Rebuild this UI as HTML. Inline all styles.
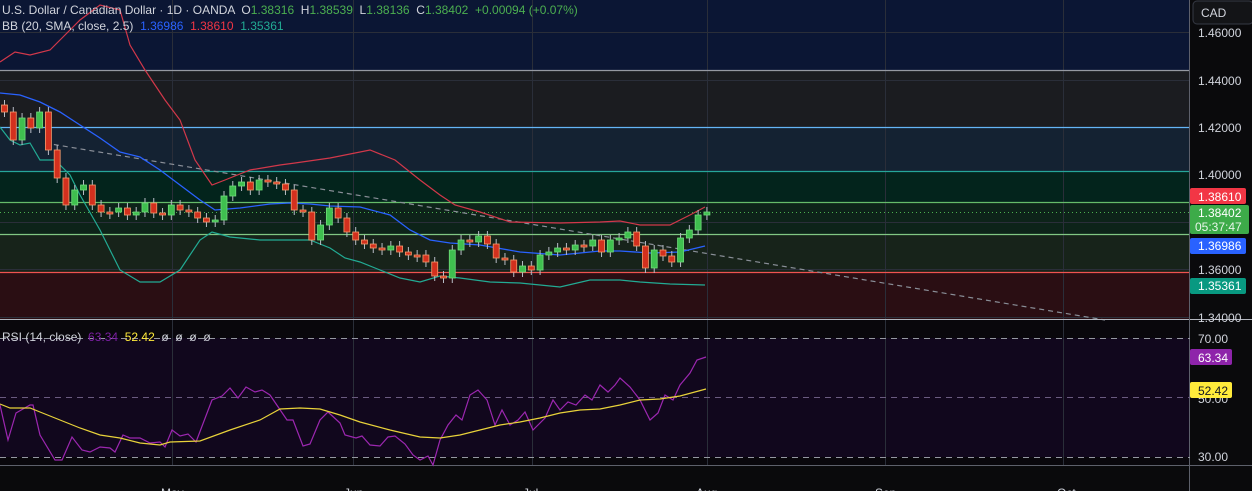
<!DOCTYPE html>
<html><head><meta charset="utf-8"><style>
html,body{margin:0;padding:0;background:#0a0a0c;width:1252px;height:491px;overflow:hidden;font-family:"Liberation Sans",sans-serif}
svg{position:absolute;left:0;top:0}
.lg{position:absolute;left:2px;font-size:12px;color:#d1d4dc;white-space:nowrap}
</style></head><body>
<svg id="s" width="1252" height="491" xmlns="http://www.w3.org/2000/svg">
<rect x="0" y="0" width="1190" height="70" fill="#0b1634"/>
<rect x="0" y="70" width="1190" height="57" fill="#1b1c20"/>
<rect x="0" y="127" width="1190" height="44" fill="#142232"/>
<rect x="0" y="171" width="1190" height="31" fill="#03241c"/>
<rect x="0" y="202" width="1190" height="32" fill="#0d2319"/>
<rect x="0" y="234" width="1190" height="38" fill="#17231a"/>
<rect x="0" y="272" width="1190" height="47" fill="#2a0e13"/>
<rect x="1190" y="0" width="62" height="320" fill="#0a0a0c"/>
<rect x="0" y="320" width="1190" height="145" fill="#09070c"/>
<rect x="0" y="338" width="1190" height="119" fill="#11071d"/>
<g stroke="#2a2e39" stroke-width="1">
<line x1="172.5" y1="0" x2="172.5" y2="465"/><line x1="353.5" y1="0" x2="353.5" y2="465"/>
<line x1="532.5" y1="0" x2="532.5" y2="465"/><line x1="707.5" y1="0" x2="707.5" y2="465"/>
<line x1="885.5" y1="0" x2="885.5" y2="465"/><line x1="1063.5" y1="0" x2="1063.5" y2="465"/>
<line x1="0" y1="32.5" x2="1190" y2="32.5"/><line x1="0" y1="80.5" x2="1190" y2="80.5"/>
<line x1="0" y1="222.5" x2="1190" y2="222.5"/><line x1="0" y1="269.5" x2="1190" y2="269.5"/>
<line x1="0" y1="317.5" x2="1190" y2="317.5"/>
</g>
<g stroke-width="1.2">
<line x1="0" y1="70.5" x2="1190" y2="70.5" stroke="#9598a1"/>
<line x1="0" y1="127.5" x2="1190" y2="127.5" stroke="#64b5f6"/>
<line x1="0" y1="171.5" x2="1190" y2="171.5" stroke="#26a69a"/>
<line x1="0" y1="202.5" x2="1190" y2="202.5" stroke="#66bb6a"/>
<line x1="0" y1="234.5" x2="1190" y2="234.5" stroke="#81c784"/>
<line x1="0" y1="272.5" x2="1190" y2="272.5" stroke="#ef5350"/>
</g>
<line x1="0" y1="212.5" x2="1190" y2="212.5" stroke="#4caf50" stroke-dasharray="1,3"/>
<line x1="45" y1="143" x2="1105" y2="320" stroke="#8a8f98" stroke-width="1.2" stroke-dasharray="5,4"/>
<polyline fill="none" stroke="#d2384a" stroke-width="1.2" points="0,62 15,52 30,55 50,50 60,40 80,20 100,5 120,10 130,45 145,70 165,100 180,120 195,160 212,185 225,180 250,170 280,165 295,163 330,158 370,150 395,160 420,180 440,195 455,205 480,212 510,222 560,223 600,222 620,221 640,225 670,225 690,215 705,207"/>
<polyline fill="none" stroke="#2962ff" stroke-width="1.3" points="0,93 20,95 40,102 60,112 80,125 100,138 120,152 140,157 160,170 180,185 200,200 215,210 240,208 270,204 290,203 310,204 330,206 360,207 390,215 410,230 430,240 450,243 480,245 520,252 560,255 600,251 620,251 650,253 680,252 705,246"/>
<polyline fill="none" stroke="#22ab94" stroke-width="1.2" points="0,127 10,140 20,145 30,143 40,160 55,160 70,175 80,195 100,230 110,250 120,270 140,282 160,282 180,270 200,240 212,232 230,237 260,240 290,240 310,240 330,248 345,258 360,262 380,270 400,278 420,282 440,276 460,278 490,282 520,283 560,287 590,280 620,280 640,282 670,284 705,285"/>
<g id="c"></g>
<line x1="0" y1="319.5" x2="1252" y2="319.5" stroke="#b2b5be"/>
<line x1="0" y1="465.5" x2="1252" y2="465.5" stroke="#5d606b"/>
<line x1="1189.5" y1="0" x2="1189.5" y2="491" stroke="#5d606b"/>
<line x1="0" y1="338.5" x2="1190" y2="338.5" stroke="#9598a1" stroke-dasharray="6,5"/>
<line x1="0" y1="397.5" x2="1190" y2="397.5" stroke="#6a5a80" stroke-dasharray="6,5"/>
<line x1="0" y1="457.5" x2="1190" y2="457.5" stroke="#9598a1" stroke-dasharray="6,5"/>
<polyline fill="none" stroke="#9c27b0" stroke-width="1.2" points="0,405 8,440 16,413 30,405 33,405 40,435 55,460 62,460 72,437 82,450 90,452 100,447 110,448 115,452 123,435 130,438 140,438 150,443 160,442 165,447 172,430 180,436 188,434 196,442 212,400 222,396 230,388 238,398 246,387 255,392 262,390 270,395 287,420 293,420 303,446 310,444 320,420 328,412 340,423 345,435 356,438 362,436 370,445 380,446 388,437 395,436 405,444 413,455 420,460 428,456 433,465 440,440 448,425 456,415 462,420 470,395 478,390 487,400 495,425 502,410 510,425 518,420 525,412 533,430 545,418 553,400 560,410 568,402 576,405 585,395 592,400 600,385 608,392 615,385 620,378 630,387 640,400 650,420 658,413 665,395 673,400 680,385 690,373 697,360 706,357"/>
<polyline fill="none" stroke="#e8d23a" stroke-width="1.2" points="0,404 10,408 30,408 40,412 60,420 80,428 100,435 120,438 140,443 160,445 170,442 200,441 230,430 260,420 280,409 300,408 320,409 340,415 360,422 390,430 420,437 440,438 460,435 480,430 500,425 520,422 540,418 560,413 580,410 600,409 620,405 640,400 660,399 680,396 706,389"/>
<g font-size="12" fill="#d1d4dc" font-family="Liberation Sans,sans-serif">
<text x="1198" y="37">1.46000</text><text x="1198" y="85">1.44000</text><text x="1198" y="132">1.42000</text>
<text x="1198" y="179">1.40000</text><text x="1198" y="274">1.36000</text><text x="1198" y="322">1.34000</text>
<text x="1198" y="343">70.00</text><text x="1198" y="403">50.00</text><text x="1198" y="461">30.00</text>
</g>
<rect x="1193" y="1" width="60" height="23" rx="4" fill="#131417" stroke="#363a45"/>
<text x="1201" y="17" font-size="12" fill="#d1d4dc" font-family="Liberation Sans,sans-serif">CAD</text>
<g font-size="12" font-family="Liberation Sans,sans-serif" fill="#fff">
<rect x="1190" y="188" width="56" height="16" rx="2" fill="#f23645"/><text x="1198" y="201">1.38610</text>
<rect x="1190" y="205" width="59" height="29" rx="2" fill="#3dab49"/><text x="1198" y="217">1.38402</text><text x="1195" y="231" fill="#e8f5e9">05:37:47</text>
<rect x="1190" y="238" width="56" height="16" rx="2" fill="#2962ff"/><text x="1198" y="250">1.36986</text>
<rect x="1190" y="278" width="56" height="16" rx="2" fill="#089981"/><text x="1198" y="290">1.35361</text>
<rect x="1190" y="349" width="42" height="16" rx="2" fill="#8e24aa"/><text x="1198" y="362">63.34</text>
<rect x="1190" y="382" width="42" height="16" rx="2" fill="#ffeb3b"/><text x="1198" y="395" fill="#131722">52.42</text>
</g>
<g font-size="12" fill="#d1d4dc" font-family="Liberation Sans,sans-serif">
<text x="161" y="497">May</text><text x="344" y="497">Jun</text><text x="523" y="497">Jul</text>
<text x="696" y="497">Aug</text><text x="875" y="497">Sep</text><text x="1057" y="497">Oct</text>
</g>
</svg>
<div class="lg" style="top:3px">U.S. Dollar / Canadian Dollar · 1D · OANDA &nbsp;O<span style="color:#4caf50">1.38316</span> &nbsp;H<span style="color:#4caf50">1.38539</span> &nbsp;L<span style="color:#4caf50">1.38136</span> &nbsp;C<span style="color:#4caf50">1.38402</span> &nbsp;<span style="color:#4caf50">+0.00094 (+0.07%)</span></div>
<div class="lg" style="top:19px">BB (20, SMA, close, 2.5) &nbsp;<span style="color:#2962ff">1.36986</span> &nbsp;<span style="color:#f23645">1.38610</span> &nbsp;<span style="color:#22ab94">1.35361</span></div>
<div class="lg" style="top:330px">RSI (14, close) &nbsp;<span style="color:#7b1fa2">63.34</span> &nbsp;<span style="color:#ffeb3b">52.42</span> &nbsp;ø &nbsp;ø &nbsp;ø &nbsp;ø</div>
<script>
var cl=[112,140,118,128,112,150,178,205,190,185,205,212,212,208,215,212,203,213,215,205,210,212,218,222,220,196,186,182,190,180,182,184,190,210,212,240,225,208,218,232,240,244,248,250,246,252,255,255,262,276,278,250,240,242,236,244,258,260,272,266,270,255,252,248,250,245,246,240,252,240,238,232,246,268,250,256,262,238,230,215,212];
var g=document.getElementById('c'),h='',prev=105;
for(var i=0;i<cl.length;i++){var x=4+i*8.78,o=prev,c=cl[i],t=Math.min(o,c),b=Math.max(o,c);if(b-t<2){b=t+2}
var up=c<o;h+='<line x1="'+(x+0.5)+'" y1="'+(t-5)+'" x2="'+(x+0.5)+'" y2="'+(b+5)+'" stroke="#b8bcc6" stroke-width="1"/>';
h+='<rect x="'+(x-2.5)+'" y="'+t+'" width="6" height="'+(b-t)+'" fill="'+(up?'#3fbf4f':'#d3301e')+'" stroke="'+(up?'#6fdc7a':'#f59a6b')+'" stroke-width="0.8"/>';prev=c;}
g.innerHTML=h;
</script>
</body></html>
